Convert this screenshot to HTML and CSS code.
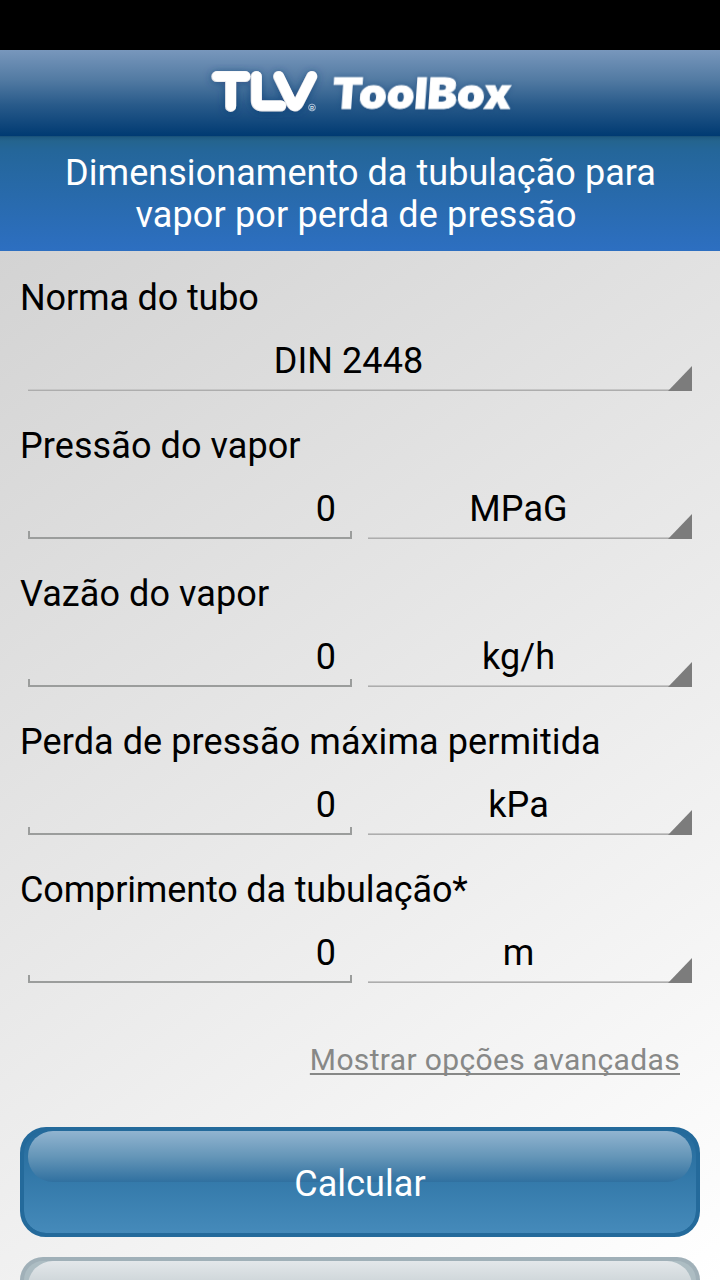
FILE: index.html
```
<!DOCTYPE html>
<html lang="pt">
<head>
<meta charset="utf-8">
<title>TLV ToolBox</title>
<link rel="stylesheet" href="styles.css">
</head>
<body>
<div class="status-bar"></div>
<header class="app-bar">
  <svg class="logo" width="320" height="84" viewBox="0 0 320 84" role="img" aria-label="TLV ToolBox">
    <defs>
      <filter id="glow" x="-20%" y="-40%" width="140%" height="180%">
        <feDropShadow dx="0" dy="1" stdDeviation="4" flood-color="#0b3973" flood-opacity=".6"/>
      </filter>
    </defs>
    <g filter="url(#glow)" fill="none" stroke-linecap="round" stroke-linejoin="round">
      <g stroke="#e4e6ea" stroke-width="11">
        <path d="M15.8 26.6H44.2M29.6 27V56.4M55.3 26.5V50.5Q55.3 56 61 56H79.8M77.6 26.5L90.5 53Q94 59 97.4 53L110.8 26.5"/>
      </g>
      <g stroke="#fff" stroke-width="10">
        <path d="M16.3 26.3H44.2M30.1 26.3V56M55.7 26.3V50Q55.7 55.6 61.5 55.6H79.8M77.9 26.3L90.8 52.7Q94.2 58.7 97.5 52.7L111 26.3"/>
      </g>
    </g>
    <circle cx="111" cy="57.5" r="3.4" fill="none" stroke="#b9cadd" stroke-width=".9"/>
    <text class="reg" x="111" y="59.5">R</text>
    <text class="brand" transform="translate(130.2 58.6) skewX(-4)" x="0" y="0" textLength="179" lengthAdjust="spacingAndGlyphs">ToolBox</text>
  </svg>
</header>
<h1 class="title"><span class="title-line">Dimensionamento da tubulação para</span><br>vapor por perda de pressão</h1>
<main class="form">
  <section class="field">
    <div class="label tight">Norma do tubo</div>
    <div class="controls single"><div class="select">DIN 2448</div></div>
  </section>
  <section class="field">
    <div class="label">Pressão do vapor</div>
    <div class="controls"><div class="input">0</div><div class="select">MPaG</div></div>
  </section>
  <section class="field">
    <div class="label">Vazão do vapor</div>
    <div class="controls"><div class="input">0</div><div class="select">kg/h</div></div>
  </section>
  <section class="field">
    <div class="label">Perda de pressão máxima permitida</div>
    <div class="controls"><div class="input">0</div><div class="select">kPa</div></div>
  </section>
  <section class="field">
    <div class="label tight">Comprimento da tubulação*</div>
    <div class="controls"><div class="input">0</div><div class="select">m</div></div>
  </section>
  <div class="more"><a class="link">Mostrar opções avançadas</a></div>
  <div class="button primary"><span>Calcular</span></div>
  <div class="button secondary"></div>
</main>
</body>
</html>
```
FILE: styles.css
```
* { box-sizing: border-box; }
body {
  margin: 0;
  width: 720px;
  height: 1280px;
  overflow: hidden;
  display: flex;
  flex-direction: column;
  font-family: Roboto, "Liberation Sans", sans-serif;
  font-size: 36px;
  letter-spacing: .08px;
  color: #000;
}
.status-bar { height: 50px; flex: none; background: #000; }
.app-bar {
  height: 86px;
  flex: none;
  display: flex;
  justify-content: center;
  background: linear-gradient(#7897bc, #537ba3 34%, #285a8a 64%, #003a72);
}
.logo { margin-left: 2px; overflow: visible; }
.brand {
  font: 900 42.5px Inter, "Liberation Sans", sans-serif;
  letter-spacing: 0;
  fill: #fff;
  stroke: #fff;
  stroke-width: .8px;
  filter: drop-shadow(0 0 3px rgba(11, 57, 115, .4));
}
.reg { font: 700 5.5px "Liberation Sans", sans-serif; letter-spacing: 0; text-anchor: middle; fill: #dce5ef; }
.title {
  margin: 0;
  height: 115px;
  flex: none;
  padding: 16px 8px 0 0;
  font-size: 36px;
  font-weight: 400;
  line-height: 42px;
  text-align: center;
  letter-spacing: .15px;
  color: #fff;
  background: linear-gradient(#164b74, #1e5a82 1px, #24648e 5px, #24669a 15px, #2d6fc1);
}
.title-line { letter-spacing: .05px; margin-right: -9px; }
.form {
  flex: 1;
  min-height: 0;
  overflow: hidden;
  padding: 18px 20px 0;
  background: linear-gradient(145deg, #d3d3d3, #fff);
}
.field { height: 148px; padding-top: 8px; line-height: 42px; }
.tight { letter-spacing: -.15px; }
.controls { display: grid; grid-template-columns: 324px 324px; gap: 16px; padding: 0 8px; margin-top: 18px; }
.single { grid-template-columns: 1fr; }
.input, .select { height: 54px; line-height: 48px; position: relative; }
.input { text-align: right; padding-right: 16px; border-bottom: 2px solid #9b9d9c; }
.input::before {
  content: "";
  position: absolute;
  left: 0;
  right: 0;
  bottom: 0;
  height: 6px;
  border: solid #9b9d9c;
  border-width: 0 2px;
}
.select { text-align: center; padding-right: 23px; border-bottom: 1px solid #adadad; box-shadow: inset 0 -1px #c6c6c6; }
.select::after {
  content: "";
  position: absolute;
  right: 0;
  bottom: -1px;
  width: 24px;
  height: 25px;
  background: #7c7c7c;
  clip-path: polygon(100% 0, 100% 100%, 0 100%);
}
.more { height: 118px; padding: 31px 20px 0 0; text-align: right; line-height: 36px; }
.link {
  font-size: 30px;
  letter-spacing: .35px;
  color: #878887;
  text-decoration: underline;
  text-decoration-thickness: 2px;
  text-underline-offset: 3px;
  text-decoration-skip-ink: none;
}
.button { height: 110px; border-radius: 26px; position: relative; margin-bottom: 20px; text-align: center; line-height: 106px; }
.button::before {
  content: "";
  position: absolute;
  top: 0;
  left: 4px;
  right: 4px;
  height: 51px;
  border-radius: 25px;
}
.button span { position: relative; color: #fff; }
.primary { border: 4px solid #246a9b; background: linear-gradient(#246a9b, #458aba) padding-box, #246a9b; }
.primary::before { background: linear-gradient(#91b4d0, #6596b8 50%, #3070a0); }
.secondary { height: 23px; margin-bottom: 0; border: solid #a0b0b8; border-width: 4px 4px 0; border-radius: 26px 26px 0 0; background: #adbdc3; overflow: hidden; }
.secondary::before { background: linear-gradient(#e3e7ea, #b1bec2); }
```
